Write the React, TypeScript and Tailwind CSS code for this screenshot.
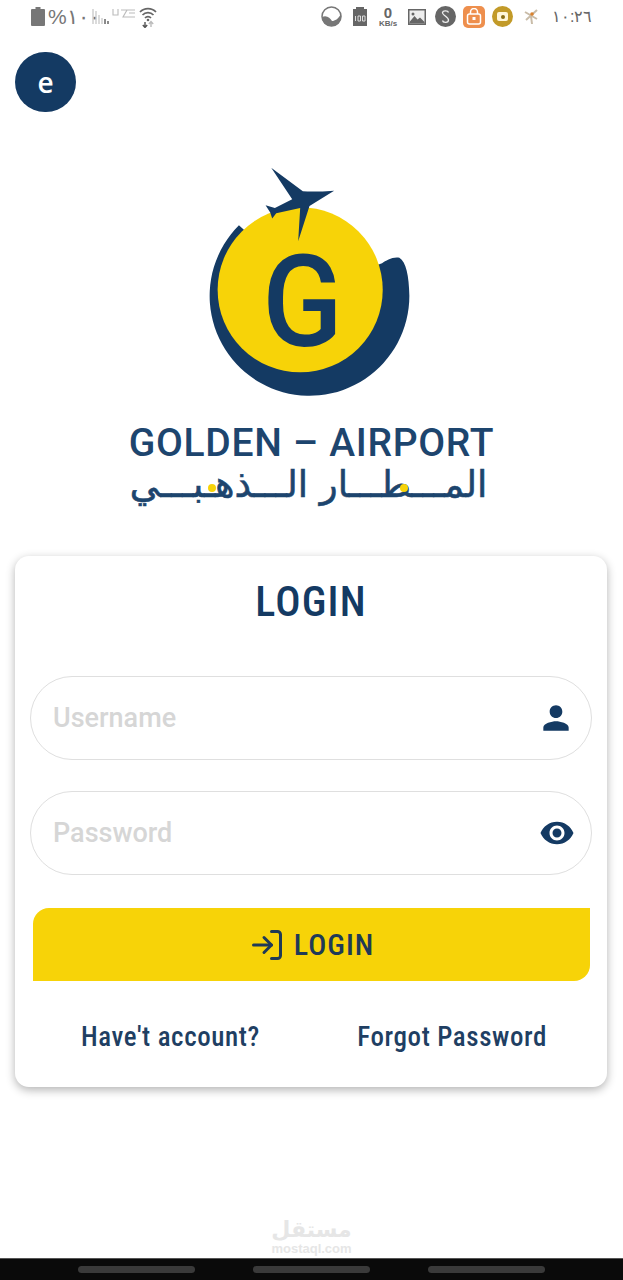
import { LogIn } from "lucide-react";
import { MdPerson, MdVisibility } from "react-icons/md";

const navy = "#143a63";

function StatusLeft() {
  return (
    <div className="flex items-center">
      <svg width="14" height="19" viewBox="0 0 14 19" className="mr-[3px]">
        <path d="M4.5 0h5v2H13a1 1 0 0 1 1 1v15a1 1 0 0 1-1 1H1a1 1 0 0 1-1-1V3a1 1 0 0 1 1-1h3.500z" fill="#777" />
      </svg>
      <span className="text-[21px] leading-none text-[#777] w-[41px] whitespace-nowrap">%١٠٠</span>
      <svg width="17" height="18" viewBox="0 0 17 18" className="ml-[3px]">
        <path d="M1 1v15M4 3v13M7 7v9M10 10v6" stroke="#c4c4c4" strokeWidth="1.200" />
        <path d="M13 11v5M16 13v3" stroke="#666" strokeWidth="1.500" />
      </svg>
      <svg width="24" height="14" viewBox="0 0 24 14" className="ml-[3px] mb-[5px]">
        <path d="M1 2v6h5V2M9 3h6l-4 7h12M15 3h8M17 6h6" stroke="#bbb" strokeWidth="1.100" fill="none" />
      </svg>
      <svg width="18" height="22" viewBox="0 0 18 22" className="ml-[3px]">
        <path d="M1 6a11 11 0 0 1 16 0M3.500 9a7.500 7.500 0 0 1 11 0M6 12a4 4 0 0 1 6 0" stroke="#666" strokeWidth="1.700" fill="none" />
        <circle cx="9" cy="14" r="1.300" fill="#666" />
        <path d="M6 16v5M3.800 19l2.200 2.500L8.200 19" stroke="#555" strokeWidth="1.400" fill="none" />
        <path d="M12 21v-5M9.800 18l2.200-2.500 2.200 2.500" stroke="#bbb" strokeWidth="1.400" fill="none" />
      </svg>
    </div>
  );
}

function StatusRight() {
  return (
    <div className="flex items-center">
      <svg width="21" height="21" viewBox="0 0 21 21">
        <circle cx="10.500" cy="10.500" r="9.500" fill="#fff" stroke="#777" strokeWidth="1.500" />
        <path d="M1 11c5-2 8 1 10 4 3 0 6-2 9-7 1 6-3 12-9 12-6 0-10-4-10-9z" fill="#777" />
      </svg>
      <svg width="14" height="19" viewBox="0 0 14 19" className="ml-[11px]">
        <path d="M3 0h8v2h3v17H0V2h3z" fill="#666" />
        <path d="M2.500 9v5M5 9h2.500v5H5zM9.500 9H12v5H9.500z" stroke="#ddd" strokeWidth="1" fill="none" />
      </svg>
      <div className="ml-[10px] w-[22px] flex flex-col items-center text-[#666] font-bold">
        <span className="text-[15px] leading-[13px]">0</span>
        <span className="text-[8px] leading-[9px] whitespace-nowrap">KB/s</span>
      </div>
      <svg width="18" height="16" viewBox="0 0 18 16" className="ml-[9px]">
        <rect width="18" height="16" fill="#666" />
        <rect x="1.500" y="1.500" width="15" height="13" fill="#eee" />
        <path d="M1.500 13l5-6 3 3.500 2.500-2 4.500 4.500v1.500h-15z" fill="#666" />
        <circle cx="5" cy="5" r="1.500" fill="#666" />
      </svg>
      <div className="ml-[9px] w-[21px] h-[21px] rounded-full bg-[#666] flex items-center justify-center">
        <svg width="11" height="15" viewBox="0 0 11 15">
          <path d="M8.500 3.500C8 1.500 3 1 2.500 3.500S8.500 8 8.500 11 3 14 2.500 11.500" stroke="#eee" strokeWidth="1.300" fill="none" />
        </svg>
      </div>
      <div className="ml-[7px] w-[22px] h-[22px] rounded-[5px] bg-[#ee8f4d] flex items-center justify-center">
        <svg width="16" height="17" viewBox="0 0 16 17">
          <path d="M4.500 6V4a3.500 3.500 0 0 1 7 0v2" stroke="#fff" strokeWidth="1.500" fill="none" />
          <rect x="1.500" y="6" width="13" height="10" rx="2" fill="none" stroke="#fff" strokeWidth="1.500" />
          <rect x="6.500" y="9" width="3" height="3" fill="#fff" />
        </svg>
      </div>
      <div className="ml-[7px] w-[21px] h-[21px] rounded-full bg-[#c29a28] flex items-center justify-center">
        <div className="w-[11px] h-[9px] rounded-[2px] bg-[#fff6d8] flex items-center justify-center">
          <div className="w-[4px] h-[4px] rounded-full bg-[#8a6d14]" />
        </div>
      </div>
      <svg width="17" height="19" viewBox="0 0 17 19" className="ml-[10px]">
        <path d="M2 5l12 7M14 3L3 13M8 9l1 8" stroke="#c9bca8" strokeWidth="2" />
        <circle cx="9" cy="7" r="1.800" fill="#d9812e" />
      </svg>
      <span className="ml-[12px] text-[16px] leading-none text-[#666] w-[38px] whitespace-nowrap">١٠:٢٦</span>
    </div>
  );
}

function Logo() {
  return (
    <svg width="207" height="233" viewBox="290 30 620 700" className="block">
      <path
        d="M388 208A300 300 0 1 0 900 420C899 360 890 318 870 306C850 302 830 315 818 322L600 400z"
        fill={navy}
      />
      <circle cx="572" cy="402" r="248" fill="#f7d308" />
      <text
        x="0"
        y="0"
        transform="translate(458 570) scale(0.92 1)"
        fontFamily="'Roboto', sans-serif"
        fontWeight="500"
        fontSize="385"
        fill={navy}
      >
        G
      </text>
      <path
        d="M674 104Q620 108 580 106L485 35L548 130L496 156L468 148L482 170L488 188L500 172L572 156L566 256L600 150Q640 125 674 104z"
        fill={navy}
      />
    </svg>
  );
}

function Field({ placeholder, type, icon }: { placeholder: string; type: string; icon: React.ReactNode }) {
  return (
    <div className="h-[84px] rounded-full border border-[#dfdfdf] flex items-center pl-[22px] pr-[16px] bg-white">
      <input
        type={type}
        placeholder={placeholder}
        className="flex-1 min-w-0 bg-transparent outline-none text-[27px] font-medium placeholder:text-[#d6d6d6] font-['Roboto',sans-serif] [font-stretch:93%]"
      />
      {icon}
    </div>
  );
}

export default function App() {
  return (
    <div className="w-[623px] h-[1280px] bg-white flex flex-col overflow-hidden font-['Roboto',sans-serif]">
      <div className="h-[33px] pl-[31px] pr-[33px] flex items-center justify-between font-['Liberation_Sans',sans-serif]">
        <StatusLeft />
        <StatusRight />
      </div>

      <div className="pl-[15px] pt-[19px]">
        <div className="w-[61px] h-[60px] rounded-full bg-[#143a63] text-white flex items-center justify-center text-[28px] font-semibold leading-none font-['Open_Sans',sans-serif]">
          e
        </div>
      </div>

      <div className="relative mt-[54px] flex flex-col items-center">
        <div className="ml-[-4px]">
          <Logo />
        </div>
        <div className="mt-[22px] h-[44px] text-[39px] leading-[44px] text-[#1d456e] font-medium tracking-[0.700px] whitespace-nowrap">
          GOLDEN – AIRPORT
        </div>
        <div
          dir="rtl"
          className="h-[56px] mr-[6px] text-[37px] leading-[40px] text-[#1d456e] font-['DejaVu_Sans',sans-serif] whitespace-nowrap [-webkit-text-stroke:0.6px_#1d456e]"
        >
          المـــطـــار الـــذهـبـــي
        </div>
        <span className="absolute left-[400px] top-[318px] w-[8px] h-[8px] rounded-full bg-[#f7d308]" />
        <span className="absolute left-[208px] top-[318px] w-[8px] h-[8px] rounded-full bg-[#f7d308]" />
      </div>

      <div className="mt-[35px] ml-[15px] mr-[16px] h-[531px] rounded-[14px] bg-white shadow-[0_3px_10px_rgba(0,0,0,0.3)] px-[15px] flex flex-col">
        <h1 className="mt-[16px] h-[60px] text-center text-[42px] leading-[60px] font-medium text-[#143a63] [font-stretch:85%] tracking-[1.200px]">
          LOGIN
        </h1>
        <div className="mt-[44px] flex flex-col gap-[31px]">
          <Field placeholder="Username" type="text" icon={<MdPerson className="text-[#143a63]" size={38} />} />
          <Field placeholder="Password" type="password" icon={<MdVisibility className="text-[#143a63]" size={36} />} />
        </div>
        <button className="mt-[33px] ml-[3px] mr-[2px] h-[73px] bg-[#f7d308] rounded-tl-[16px] rounded-br-[16px] flex items-center justify-center gap-[9px] text-[#1f3a57] text-[30px] font-medium [font-stretch:85%] tracking-[1px]">
          <LogIn size={36} strokeWidth={2} />
          LOGIN
        </button>
        <div className="mt-[36px] flex justify-between pl-[51px] pr-[45px] text-[27px] leading-[40px] font-medium text-[#1f3f63] [font-stretch:85%] tracking-[0.600px]">
          <a>Have't account?</a>
          <a>Forgot Password</a>
        </div>
      </div>

      <div className="flex-1 flex flex-col justify-end items-center text-[#e6e6e6] font-['DejaVu_Sans',sans-serif] font-bold">
        <span className="text-[22px] leading-[24px]">مستقل</span>
        <span className="text-[13px] leading-[13px] mb-[3px] font-['Liberation_Sans',sans-serif]">mostaql.com</span>
      </div>
      <div className="h-[22px] bg-[#0a0a0a] border-t border-[#555] flex items-center justify-center gap-[58px]">
        <div className="w-[117px] h-[7px] rounded-full bg-[#3a3a3a]" />
        <div className="w-[117px] h-[7px] rounded-full bg-[#3a3a3a]" />
        <div className="w-[117px] h-[7px] rounded-full bg-[#3a3a3a]" />
      </div>
    </div>
  );
}
